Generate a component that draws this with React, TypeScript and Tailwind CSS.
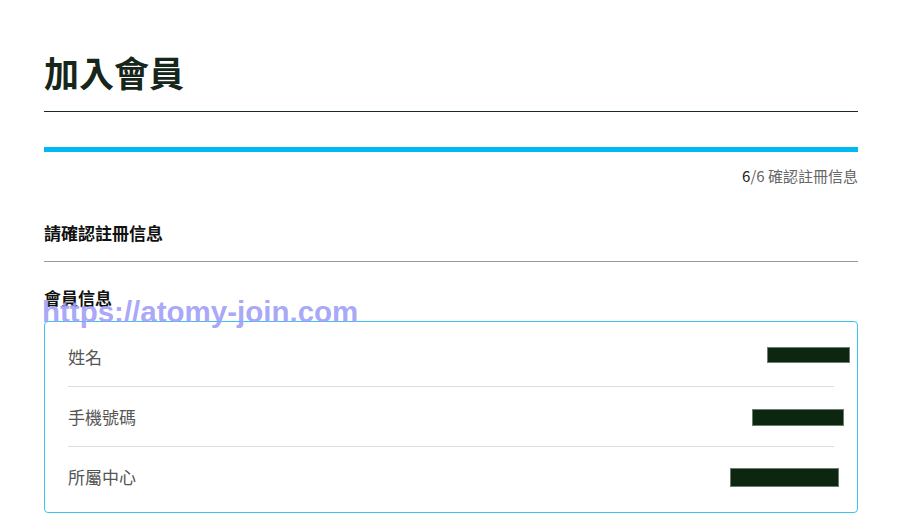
const rows = [
  { label: "姓名", box: "w-[83px] h-[16px] -mr-4 -mt-[4px]" },
  { label: "手機號碼", box: "w-[92px] h-[17px] -mr-[10px] mt-[2px]" },
  { label: "所屬中心", box: "w-[109px] h-[19px] -mr-[5px] mt-[1px]" },
];

export default function App() {
  return (
    <div
      className="relative min-h-[516px] bg-white pl-[44px] pr-[42px] pt-[52px] text-[#222]"
      style={{ fontFamily: '"Noto Sans CJK TC", "Noto Sans", sans-serif' }}
    >
      <div className="border-b border-[#1c2a1e] pb-[19px]">
        <h1 className="text-[35px] font-bold leading-[40px] text-[#16261a]">加入會員</h1>
      </div>

      <div className="mt-[35px] h-[5px] bg-[#00b9f2]" />

      <p className="mt-[14px] text-right text-[15px] leading-[20px] text-[#666]">
        <span className="text-[#222]">6</span>/6 確認註冊信息
      </p>

      <div className="mt-[35px] border-b border-[#999] pb-[16px]">
        <h2 className="text-[17px] font-bold leading-[24px] text-[#111]">請確認註冊信息</h2>
      </div>

      <h3 className="mt-[24px] text-[17px] font-bold leading-[24px] text-[#111]">會員信息</h3>

      <div className="mt-[11px] rounded-[4px] border border-[#38c6f0] px-[23px] py-[5px]">
        {rows.map((row, i) => (
          <div
            key={row.label}
            className={`flex h-[60px] items-center justify-between ${
              i < rows.length - 1 ? "border-b border-[#ddd]" : ""
            }`}
          >
            <span className="text-[17px] text-[#555]">{row.label}</span>
            <span className={`block border border-[#6b7d6c] bg-[#0d2610] ${row.box}`} />
          </div>
        ))}
      </div>

      <div
        className="pointer-events-none absolute left-[42px] top-[297px] text-[29.5px] font-bold leading-[29px] text-[#9d9df6]/90"
        style={{ fontFamily: '"Liberation Sans", Arial, sans-serif' }}
      >
        https://atomy-join.com
      </div>
    </div>
  );
}
